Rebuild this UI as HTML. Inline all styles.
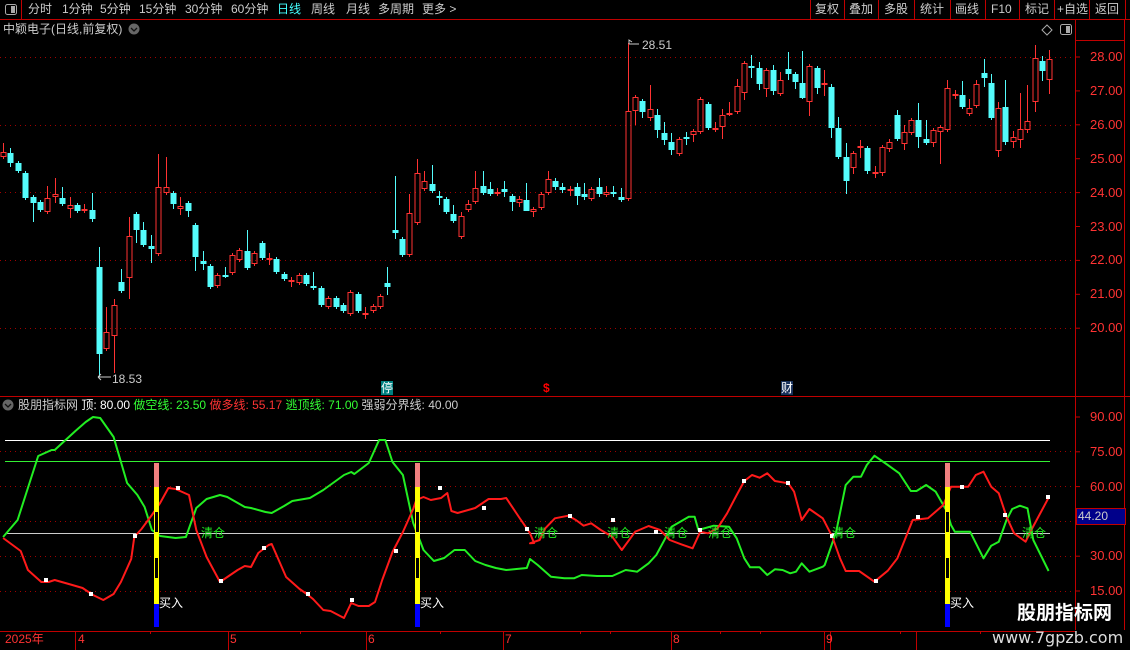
<!DOCTYPE html>
<html><head><meta charset="utf-8"><style>
html,body{margin:0;padding:0;background:#000;width:1130px;height:650px;overflow:hidden;font-family:"Liberation Sans","Noto Sans CJK SC",sans-serif}
.t{position:absolute;white-space:nowrap;font-size:12px;line-height:14px}
svg{position:absolute;left:0;top:0}
</style></head><body>
<svg id="s" width="1130" height="650" xmlns="http://www.w3.org/2000/svg">
<line x1="0" y1="19.5" x2="1130" y2="19.5" stroke="#c00000"/>
<line x1="21.5" y1="0" x2="21.5" y2="19" stroke="#c00000"/>
<rect x="5.5" y="4.5" width="11" height="10" rx="2" fill="none" stroke="#aaa"/><rect x="11" y="6" width="4" height="7" fill="#aaa"/>
<g stroke="#c00000">
<line x1="810.5" y1="0" x2="810.5" y2="19"/><line x1="844.5" y1="0" x2="844.5" y2="19"/><line x1="878.5" y1="0" x2="878.5" y2="19"/><line x1="914.5" y1="0" x2="914.5" y2="19"/><line x1="950.5" y1="0" x2="950.5" y2="19"/><line x1="985.5" y1="0" x2="985.5" y2="19"/><line x1="1019.5" y1="0" x2="1019.5" y2="19"/><line x1="1054.5" y1="0" x2="1054.5" y2="19"/><line x1="1089.5" y1="0" x2="1089.5" y2="19"/><line x1="1125.5" y1="0" x2="1125.5" y2="19"/>
</g>
<line x1="1075.5" y1="19" x2="1075.5" y2="630" stroke="#c00000"/>
<line x1="1124.5" y1="19" x2="1124.5" y2="630" stroke="#c00000"/>
<line x1="1075" y1="40.5" x2="1124" y2="40.5" stroke="#c00000"/>
<line x1="0" y1="396.5" x2="1130" y2="396.5" stroke="#c00000"/>
<line x1="0" y1="631.5" x2="1075" y2="631.5" stroke="#c00000"/>
<circle cx="134" cy="29" r="5.5" fill="#666"/><path d="M131 28l3 3 3-3" stroke="#111" stroke-width="1.3" fill="none"/>
<circle cx="8" cy="405" r="5.5" fill="#666"/><path d="M5 404l3 3 3-3" stroke="#111" stroke-width="1.3" fill="none"/>
<path d="M1047 25l5 5-5 5-5-5z" fill="none" stroke="#aaa"/>
<rect x="1060.5" y="24.5" width="11" height="10" rx="2" fill="none" stroke="#aaa"/><rect x="1066" y="26" width="4" height="7" fill="#aaa"/>
<g id="g"></g>
</svg>
<div class="t" style="left:28px;top:2px;color:#ccc">分时</div>
<div class="t" style="left:62px;top:2px;color:#ccc">1分钟</div>
<div class="t" style="left:100px;top:2px;color:#ccc">5分钟</div>
<div class="t" style="left:139px;top:2px;color:#ccc">15分钟</div>
<div class="t" style="left:185px;top:2px;color:#ccc">30分钟</div>
<div class="t" style="left:231px;top:2px;color:#ccc">60分钟</div>
<div class="t" style="left:277px;top:2px;color:#4ff">日线</div>
<div class="t" style="left:311px;top:2px;color:#ccc">周线</div>
<div class="t" style="left:346px;top:2px;color:#ccc">月线</div>
<div class="t" style="left:378px;top:2px;color:#ccc">多周期</div>
<div class="t" style="left:422px;top:2px;color:#ccc">更多 &gt;</div>
<div class="t" style="left:815px;top:2px;color:#ccc">复权</div>
<div class="t" style="left:849px;top:2px;color:#ccc">叠加</div>
<div class="t" style="left:884px;top:2px;color:#ccc">多股</div>
<div class="t" style="left:920px;top:2px;color:#ccc">统计</div>
<div class="t" style="left:955px;top:2px;color:#ccc">画线</div>
<div class="t" style="left:991px;top:2px;color:#ccc">F10</div>
<div class="t" style="left:1025px;top:2px;color:#ccc">标记</div>
<div class="t" style="left:1057px;top:2px;color:#ccc">+自选</div>
<div class="t" style="left:1095px;top:2px;color:#ccc">返回</div>
<div class="t" style="left:3px;top:22px;color:#ccc">中颖电子(日线,前复权)</div>
<div class="t" style="left:18px;top:398px;color:#ccc">股朋指标网 <span style="color:#fff">顶: 80.00</span> <span style="color:#3f3">做空线: 23.50</span> <span style="color:#f33">做多线: 55.17</span> <span style="color:#3f3">逃顶线: 71.00</span> 强弱分界线: 40.00</div>
<div class="t" style="left:642px;top:38px;color:#ccc">28.51</div>
<div class="t" style="left:112px;top:372px;color:#ccc">18.53</div>
<div class="t" style="left:381px;top:381px;background:#008080;color:#fff">停</div>
<div class="t" style="left:543px;top:381px;color:#f00;font-weight:bold">$</div>
<div class="t" style="left:781px;top:381px;background:#18305a;color:#fff">财</div>
<div id="lab"></div>
<div class="t" style="left:1076px;top:508px;width:47px;height:15px;background:#00008a;color:#ccc;border:1px solid #c00000;padding-left:1px">44.20</div>
<div class="t" style="left:5px;top:632px;color:#f33">2025年</div>
<div class="t" style="left:78px;top:632px;color:#f33">4</div>
<div class="t" style="left:230px;top:632px;color:#f33">5</div>
<div class="t" style="left:368px;top:632px;color:#f33">6</div>
<div class="t" style="left:505px;top:632px;color:#f33">7</div>
<div class="t" style="left:673px;top:632px;color:#f33">8</div>
<div class="t" style="left:826px;top:632px;color:#f33">9</div>
<div class="t" style="left:1017px;top:603px;color:#fff;font-size:19px;line-height:22px;font-weight:bold">股朋指标网</div>
<div class="t" style="left:992px;top:628px;color:#ddd;font-size:16px;line-height:19px;font-family:'DejaVu Sans',sans-serif">www.7gpzb.com</div>
<script>
var NS="http://www.w3.org/2000/svg",g=document.getElementById('g');
function el(t,a){var e=document.createElementNS(NS,t);for(var k in a)e.setAttribute(k,a[k]);g.appendChild(e);return e;}
var R="#ff3232",C="#54fcfc";
[57,125,192,260,328].forEach(function(y){el('line',{x1:0,y1:y+.5,x2:1075,y2:y+.5,stroke:"#a00000","stroke-dasharray":"1 4"});});
[451,486,521,556,591].forEach(function(y){el('line',{x1:0,y1:y+.5,x2:1075,y2:y+.5,stroke:"#a00000","stroke-dasharray":"1 4"});});
var lab=document.getElementById('lab'),h='';
for(var p=28;p>=20;p--){var y=57+(28-p)*33.9;h+='<div class="t" style="left:1090px;top:'+(y-7)+'px;color:#f33;font-size:13px">'+p+'.00</div>';
el('line',{x1:1075,y1:y,x2:1080,y2:y,stroke:"#c00000"});}
[90,75,60,45,30,15].forEach(function(v){var y=417+(90-v)*2.32;h+='<div class="t" style="left:1090px;top:'+(y-7)+'px;color:#f33;font-size:13px">'+v.toFixed(2)+'</div>';el('line',{x1:1075,y1:y,x2:1080,y2:y,stroke:"#c00000"});});
var A=[[152,157,143,0,'r'],[153,163,148,167,'c'],[163,171,0,0,'c'],[173,198,0,0,'c'],[197,203,0,222,'c'],[202,210,0,0,'c'],[198,212,186,0,'r'],[194,197,178,203,'r'],[198,204,187,0,'c'],[205,209,197,218,'r'],[205,211,0,0,'c'],[209,211,204,213,'r'],[210,219,193,222,'c'],[267,354,247,377,'c'],[332,349,307,0,'r'],[305,336,299,373,'r'],[282,291,269,0,'c'],[236,278,217,299,'r'],[214,230,0,243,'c'],[230,245,222,0,'c'],[246,249,235,263,'c'],[187,254,154,0,'r'],[187,193,157,0,'r'],[193,204,0,209,'c'],[206,209,197,215,'r'],[203,211,0,217,'c'],[225,257,0,271,'c'],[261,264,251,270,'c'],[266,287,0,0,'c'],[275,286,0,0,'r'],[275,276,267,0,'c'],[255,273,0,0,'r'],[250,260,0,0,'r'],[251,268,230,0,'c'],[253,264,0,0,'r'],[243,258,0,0,'c'],[258,260,253,265,'r'],[259,272,0,0,'c'],[274,279,0,0,'c'],[280,281,277,287,'r'],[275,283,0,0,'r'],[275,284,0,0,'c'],[286,288,272,0,'c'],[288,305,0,0,'c'],[298,307,0,0,'r'],[298,307,0,0,'c'],[305,311,0,0,'c'],[292,314,0,0,'r'],[294,311,0,0,'c'],[313,315,307,319,'r'],[306,311,0,0,'r'],[296,307,0,0,'r'],[283,287,267,295,'c'],[230,233,176,239,'c'],[239,255,0,0,'c'],[213,255,194,0,'r'],[173,223,159,0,'r']];
A.forEach(function(d,i){d.unshift(3+7.39*i);});
var B=[[424,181,189,171,0,'r'],[432,184,191,165,193,'c'],[439,196,197,191,205,'c'],[446,199,212,0,0,'c'],[453,214,221,205,0,'c'],[461,216,237,212,0,'r'],[468,204,210,200,0,'r'],[475,188,202,171,0,'r'],[483,186,193,171,0,'c'],[490,189,194,182,0,'c'],[497,192,194,188,196,'r'],[504,189,192,181,197,'c'],[512,196,202,0,211,'c'],[519,199,203,196,207,'r'],[526,200,211,183,205,'c'],[533,209,212,0,217,'r'],[541,194,208,0,0,'r'],[548,179,193,171,0,'r'],[555,181,187,178,190,'c'],[562,187,190,183,193,'c'],[570,189,191,186,196,'r'],[577,187,196,183,205,'c'],[584,194,197,183,200,'c'],[591,189,199,0,201,'r'],[599,187,194,178,197,'c'],[606,192,195,186,197,'r'],[613,192,194,186,197,'c'],[621,197,200,188,202,'c'],[628,111,199,43,0,'r'],[635,97,111,0,125,'r'],[642,101,112,99,118,'c'],[650,109,118,85,121,'r'],[657,115,130,109,138,'c'],[664,133,140,122,145,'c'],[671,142,150,133,155,'c'],[679,139,154,0,156,'r'],[686,137,138,132,145,'c'],[693,131,135,0,142,'r'],[700,99,132,0,134,'r'],[708,104,128,0,0,'c'],[715,128,129,122,132,'r'],[722,115,127,109,139,'r'],[729,113,115,102,116,'r'],[737,86,112,79,0,'r'],[744,63,93,61,100,'r'],[751,66,68,55,78,'c'],[759,68,84,62,90,'c'],[766,70,89,0,97,'r'],[773,70,91,65,95,'c'],[780,80,94,72,0,'r'],[788,69,74,52,80,'c'],[795,74,82,0,89,'c'],[802,83,98,51,99,'c'],[809,66,102,0,116,'r'],[817,68,88,66,94,'c'],[824,83,85,70,96,'r'],[831,87,128,84,138,'c'],[838,128,157,117,0,'c'],[846,157,181,143,194,'c'],[853,153,168,0,174,'r'],[860,146,148,140,158,'r'],[867,148,171,0,174,'c'],[875,172,173,166,178,'r'],[882,147,173,0,176,'r'],[889,142,149,139,152,'r'],[897,115,139,110,0,'c'],[904,132,144,125,150,'r'],[911,120,133,0,0,'r'],[918,120,137,103,148,'c'],[926,139,143,120,145,'c'],[933,130,143,0,147,'r'],[940,127,132,125,164,'r'],[947,88,130,80,132,'r'],[955,94,95,90,99,'r'],[962,95,107,81,0,'c'],[969,108,114,99,0,'r'],[976,84,106,80,0,'r'],[984,73,78,59,87,'c'],[991,83,118,74,120,'c'],[998,108,151,102,157,'r'],[1005,107,142,80,145,'c'],[1013,137,142,131,148,'r'],[1020,129,140,93,148,'r'],[1027,121,130,85,133,'r'],[1035,58,102,45,112,'r'],[1042,61,71,56,81,'c'],[1049,59,80,50,94,'r']];
A.concat(B).forEach(function(d){var x=Math.round(d[0])+.5,t=d[1],b=d[2],wt=d[3]||t-2,wb=d[4]||b+2,c=d[5]=='r'?R:C;
if(d[5]=='r'){el('line',{x1:x,y1:wt,x2:x,y2:t,stroke:c});el('line',{x1:x,y1:b,x2:x,y2:wb,stroke:c});el('rect',{x:x-2.5,y:t+.5,width:5,height:Math.max(1,b-t-1),fill:'none',stroke:c});}
else{el('line',{x1:x,y1:wt,x2:x,y2:wb,stroke:c});el('rect',{x:x-3,y:t,width:6,height:Math.max(2,b-t),fill:c});}});
el('path',{d:"M98 377h13M98 377l3-3M98 377l3 3",stroke:"#ccc",fill:"none"});
el('path',{d:"M629 44h10M629 44v-4l3 2",stroke:"#ccc",fill:"none"});
el('line',{x1:5,y1:440.5,x2:1050,y2:440.5,stroke:"#fff"});
el('line',{x1:5,y1:461.5,x2:1050,y2:461.5,stroke:"#33ee33"});
el('line',{x1:5,y1:533.5,x2:1050,y2:533.5,stroke:"#ccc"});
function poly(pts,col){el('polyline',{points:pts.map(function(p){return p[0].toFixed(1)+','+p[1].toFixed(1)}).join(' '),fill:'none',stroke:col,"stroke-width":2,"stroke-linejoin":"round"});}
var g8=[[3,537],[17,520],[37,456],[50,450],[53,450],[73,431],[83,422],[90,417],[97,418],[110,437],[123,483],[133,495],[140,507],[147,530],[155,536],[170,538],[180,537],[190,508],[200,499],[213,495],[220,497],[237,507],[243,508],[257,512],[263,513],[275,506],[283,501],[300,498],[313,490],[333,475],[340,472],[343,474],[357,463],[367,440],[373,440],[380,462],[390,475],[400,523],[410,550],[420,561],[430,558],[440,550],[450,550],[460,561],[470,565],[480,568],[490,570],[500,569],[510,568]].map(function(p){return [p[0]*1.033,p[1]];});
var r8=[[3,538],[20,551],[27,570],[40,582],[47,582],[53,580],[70,585],[80,588],[90,595],[100,600],[110,594],[117,582],[127,559],[130,537],[137,529],[147,515],[155,503],[163,488],[170,489],[183,495],[190,530],[200,557],[213,582],[230,570],[237,566],[243,567],[250,553],[260,545],[263,544],[277,577],[290,589],[297,594],[303,599],[313,610],[320,611],[333,618],[340,603],[347,606],[357,606],[363,602],[370,580],[380,552],[390,532],[400,509],[403,500],[410,497],[417,500],[427,498],[433,493],[437,511],[443,513],[460,508],[473,499],[485,499],[490,498],[503,518],[513,533],[517,543]].map(function(p){return [p[0]*1.033,p[1]];});
function z9(a){var o=[];for(var i=0;i<a.length;i+=2)o.push([530+a[i]/2.613,405+a[i+1]/3]);return o;}
var g9=z9([0,462,20,480,55,515,90,520,115,520,135,510,175,513,215,513,250,495,280,500,310,475,330,450,370,365,415,335,430,335,440,375,480,362,520,365,540,400,560,460,575,487,600,487,620,510,640,493,660,495,680,505,695,500,710,475,730,500,765,485,770,480,800,380,825,240,845,215,865,215,880,180,900,152,935,180,965,205,995,258,1010,258,1035,240,1060,260,1075,290,1090,320,1100,360,1110,380,1150,380,1185,460,1205,422,1225,410,1245,345,1260,312,1280,302,1300,310,1315,405,1355,498]);
var r9=z9([0,415,25,405,40,370,65,340,100,332,120,345,140,362,160,355,185,375,215,395,240,435,275,380,310,363,340,375,365,405,395,418,425,430,445,380,465,385,490,370,515,325,540,270,560,228,580,210,600,218,620,205,640,228,675,235,690,260,710,345,730,312,765,340,790,395,810,460,825,498,860,498,900,530,935,497,960,460,1000,345,1040,340,1080,300,1100,245,1145,245,1165,210,1185,200,1205,245,1225,265,1245,335,1265,385,1295,410,1310,375,1355,278]);
poly(g8.concat(g9),"#22ee22");poly(r8.concat(r9),"#ff1a1a");
[[135,536],[46,580],[91,594],[178,488],[221,581],[264,548],[308,594],[352,600],[396,551],[440,488],[484,508],[527,529],[570,516],[613,520],[656,532],[700,530],[744,481],[788,483],[832,536],[876,581],[918,517],[962,487],[1005,515],[1048,497]].forEach(function(p){el('rect',{x:p[0]-2,y:p[1]-2,width:4,height:4,fill:'#fff'});});
[156,417,947].forEach(function(x){var s=[[463,487,'#f08080'],[487,511,'#ff0'],[511,533,'#000'],[533,557,'#ff0'],[557,579,'#000'],[579,604,'#ff0'],[604,627,'#00f']];
s.forEach(function(q){el('rect',{x:x-2,y:q[0],width:5,height:q[1]-q[0],fill:q[2]});if(q[2]=='#000')el('rect',{x:x-1.5,y:q[0]+.5,width:4,height:q[1]-q[0]-1,fill:'none',stroke:'#ff0'});});
h+='<div class="t" style="left:'+(x+3)+'px;top:596px;color:#fff">买入</div>';});
[201,534,607,664,708,832,1022].forEach(function(x){h+='<div class="t" style="left:'+x+'px;top:526px;color:#2e2">清仓</div>';});
[75,228,366,503,671,824].forEach(function(x){el('line',{x1:x+.5,y1:631,x2:x+.5,y2:650,stroke:"#c00000"});});
[150,300,440,580,610,720,760,900,980].forEach(function(x){el('line',{x1:x+.5,y1:631,x2:x+.5,y2:634,stroke:"#c00000"});});
el('rect',{x:830.5,y:631.5,width:86,height:20,fill:'none',stroke:'#c00000'});
lab.innerHTML=h;
</script>
</body></html>
